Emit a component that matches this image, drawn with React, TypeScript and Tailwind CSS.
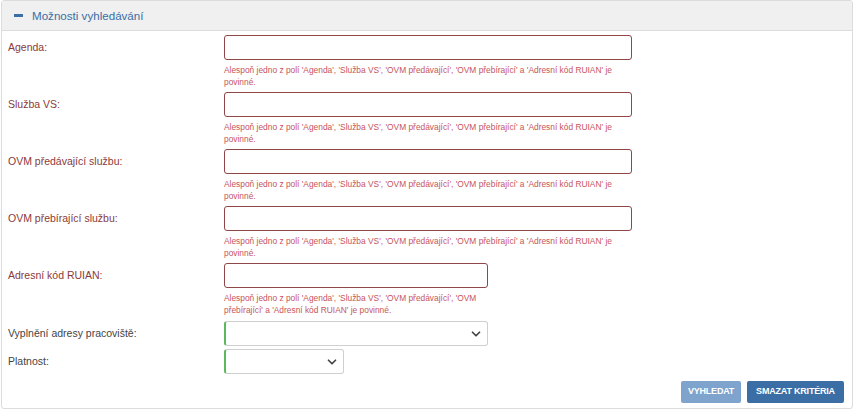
import React from "react";
import { ChevronDown } from "lucide-react";

const ERR =
  "Alespoň jedno z polí 'Agenda', 'Služba VS', 'OVM předávající', 'OVM přebírající' a 'Adresní kód RUIAN' je povinné.";

function TextRow({ label, wide = true }: { label: string; wide?: boolean }) {
  return (
    <div className="flex mb-[4px]">
      <div className="w-[216px] h-[25px] flex items-center text-[10.5px] text-[#8a3a3a]">
        {label}
      </div>
      <div className={wide ? "w-[408px]" : "w-[264px]"}>
        <input
          type="text"
          className="block w-full h-[25px] border border-[#8e4646] rounded-[3px] bg-white outline-none"
        />
        <div className="mt-[4px] text-[8.4px] leading-[12px] text-[#c8545a] pr-[2px]">
          {ERR}
        </div>
      </div>
    </div>
  );
}

function SelectRow({ label, width }: { label: string; width: string }) {
  return (
    <div className="flex mb-[3px]">
      <div className="w-[216px] h-[25px] flex items-center text-[10.5px] text-[#444]">
        {label}
      </div>
      <div
        className={`${width} h-[25px] border border-[#cfcfcf] border-l-2 border-l-[#5cb85c] rounded-[3px] bg-white flex items-center justify-end pr-[4px]`}
      >
        <ChevronDown size={14} strokeWidth={3} className="text-[#444]" />
      </div>
    </div>
  );
}

export default function App() {
  return (
    <div className="w-[855px] h-[411px] bg-white" style={{ fontFamily: '"Liberation Sans", Arial, sans-serif' }}>
      <div className="ml-px w-[852px] h-[409px] border border-[#dcdcdc] rounded-[3px] flex flex-col">
        <div className="h-[30px] bg-[#f0f0f0] border-b border-[#dcdcdc] flex items-center pl-[12px] gap-[9px]">
          <span className="w-[9px] h-[3px] bg-[#3a6ea5] inline-block"></span>
          <span className="text-[11.6px] text-[#3a6ea5]">Možnosti vyhledávání</span>
        </div>
        <div className="pt-[4px] pl-[6px] pr-[8px] flex flex-col">
          <TextRow label="Agenda:" />
          <TextRow label="Služba VS:" />
          <TextRow label="OVM předávající službu:" />
          <TextRow label="OVM přebírající službu:" />
          <TextRow label="Adresní kód RUIAN:" wide={false} />
          <div className="mt-[1px]">
            <SelectRow label="Vyplnění adresy pracoviště:" width="w-[264px]" />
            <SelectRow label="Platnost:" width="w-[120px]" />
          </div>
          <div className="flex justify-end gap-[6px] mt-[4px]">
            <button className="h-[22px] w-[60px] rounded-[2px] bg-[#7ea3cd] text-white text-[9px] font-bold tracking-[-0.2px]">
              VYHLEDAT
            </button>
            <button className="h-[22px] w-[97px] rounded-[2px] bg-[#3a6ea5] text-white text-[9px] font-bold tracking-[-0.2px]">
              SMAZAT KRITÉRIA
            </button>
          </div>
        </div>
      </div>
    </div>
  );
}
